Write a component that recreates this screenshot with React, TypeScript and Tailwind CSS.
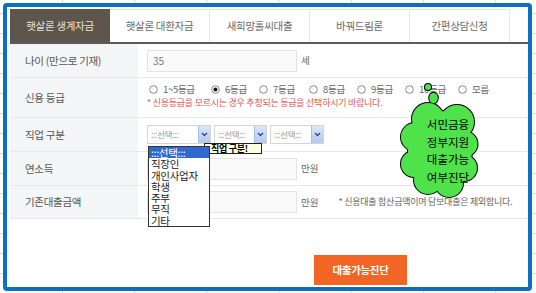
import React from "react";

const F = "font-['Noto_Sans_CJK_KR','Noto_Sans',sans-serif]";

function Radio({ checked }: { checked?: boolean }) {
  return (
    <svg width="9" height="9" viewBox="0 0 9 9" className="shrink-0">
      <circle cx="4.5" cy="4.5" r="3.8" fill="#fff" stroke="#8a8a8a" strokeWidth="1" />
      {checked && <circle cx="4.5" cy="4.5" r="2" fill="#111" />}
    </svg>
  );
}

function Select({ w }: { w: string }) {
  return (
    <div className={`${w} h-[19px] border border-[#d4d4d4] bg-white flex items-center justify-between`}>
      <span className="pl-[3px] text-[8.5px] text-[#9a9a9a] tracking-[-0.3px]">:::선택:::</span>
      <div className="w-[12px] h-[17px] bg-[linear-gradient(to_bottom,#dde7f8,#b3c7ee)] border-l border-[#a9bde6] flex items-center justify-center">
        <svg width="7" height="5" viewBox="0 0 7 5">
          <path d="M1 1 L3.5 3.5 L6 1" fill="none" stroke="#2b4c8c" strokeWidth="1.4" />
        </svg>
      </div>
    </div>
  );
}

function Input({ value }: { value?: string }) {
  return (
    <div className="w-[150px] h-[22px] border border-[#e3e3e3] bg-[#fafafa] flex items-center pl-[5px] text-[10px] text-[#777]">
      {value}
    </div>
  );
}

function Row({ label, h, children }: { label: string; h: string; children: React.ReactNode }) {
  return (
    <div className={`flex ${h} border-b border-[#e8e8e8]`}>
      <div className="w-[128px] bg-[#f3f5f6] flex items-center pl-[15px] text-[10.5px] text-[#555] tracking-[-0.3px]">
        {label}
      </div>
      <div className="flex-1 pl-[9px] flex items-center">{children}</div>
    </div>
  );
}

const CIRCLES: [number, number, number, number][] = [
  [428, 87, 3, 3],
  [433.5, 98, 4.3, 5.3],
  [428, 119, 16, 16],
  [457, 122, 17, 17],
  [415, 137, 14, 14],
  [414, 164, 13, 13],
  [465, 144, 12.5, 12.5],
  [464, 168, 13, 13],
  [428, 180, 14, 14],
  [449, 183, 14, 14],
  [440, 150, 32, 39],
];

export default function App() {
  const tabs = ["햇살론 대환자금", "새희망홀씨대출", "바꿔드림론", "간편상담신청"];
  const radios: [string, string, boolean][] = [
    ["1~5등급", "w-[62px]", false],
    ["6등급", "w-[48px]", true],
    ["7등급", "w-[50px]", false],
    ["8등급", "w-[48px]", false],
    ["9등급", "w-[48px]", false],
    ["10등급", "w-[53px]", false],
    ["모름", "w-[40px]", false],
  ];
  const items = [":::선택:::", "직장인", "개인사업자", "학생", "주부", "무직", "기타"];
  return (
    <div
      className={`${F} relative w-[536px] h-[293px] overflow-hidden bg-white bg-[linear-gradient(to_right,#d9d9d9_1px,transparent_1px),linear-gradient(to_bottom,#d9d9d9_1px,transparent_1px)] bg-[length:72.2px_20px] bg-[position:62px_13px] pt-[3px] pl-[3px]`}
    >
      <div className="w-[529px] h-[288px] border-4 border-[#0b6fc4] rounded-[4px] bg-white pl-[3px] pt-[2px] flex flex-col">
        {/* tabs */}
        <div className="flex h-[33px]">
          <div className="w-[100px] bg-[#5e554c] text-[#e6e1da] text-[10.5px] tracking-[-0.3px] flex items-center justify-center">
            햇살론 생계자금
          </div>
          {tabs.map((t) => (
            <div
              key={t}
              className="w-[100px] border-t border-r border-[#e6e6e6] text-[#6a6a6a] text-[10.5px] tracking-[-0.3px] flex items-center justify-center"
            >
              {t}
            </div>
          ))}
        </div>
        <div className="h-[2px] bg-[#5b5b5b]" />

        <Row label="나이 (만으로 기재)" h="h-[34px]">
          <Input value="35" />
          <span className="ml-[4px] text-[9.5px] text-[#666]">세</span>
        </Row>

        <div className="flex h-[40px] border-b border-[#e8e8e8]">
          <div className="w-[128px] bg-[#f3f5f6] flex items-center pl-[15px] text-[10.5px] text-[#555] tracking-[-0.3px]">
            신용 등급
          </div>
          <div className="flex-1 pl-[11px] pt-[4px] flex flex-col">
            <div className="flex items-center h-[14px]">
              {radios.map(([t, w, c]) => (
                <div key={t} className={`${w} flex items-center gap-[5px] text-[9.5px] text-[#666] tracking-[-0.3px]`}>
                  <Radio checked={c} />
                  <span>{t}</span>
                </div>
              ))}
            </div>
            <div className="-ml-[2px] h-[14px] flex items-center text-[9px] text-[#e0575c] tracking-[-0.25px]">
              * 신용등급을 모르시는 경우 추정되는 등급을 선택하시기 바랍니다.
            </div>
          </div>
        </div>

        <Row label="직업 구분" h="h-[34px]">
          <div className="flex gap-[3px]">
            <Select w="w-[64px]" />
            <Select w="w-[53px]" />
            <Select w="w-[54px]" />
          </div>
        </Row>

        <Row label="연소득" h="h-[34px]">
          <Input />
          <span className="ml-[4px] text-[9.5px] text-[#666]">만원</span>
        </Row>

        <Row label="기존대출금액" h="h-[33px]">
          <Input />
          <span className="ml-[4px] text-[9.5px] text-[#666]">만원</span>
          <span className="ml-[20px] text-[9px] text-[#666] tracking-[-0.25px]">
            * 신용대출 합산금액이며 담보대출은 제외합니다.
          </span>
        </Row>

        <div className="pl-[304px] pt-[36px]">
          <div className="w-[93px] h-[30px] bg-[#f26524] text-white text-[10.5px] font-bold tracking-[-0.3px] flex items-center justify-center">
            대출가능진단
          </div>
        </div>
      </div>

      {/* tooltip */}
      <div className="absolute left-[204px] top-[143px] w-[58px] h-[11px] bg-[#ffffe1] border border-[#222] pl-[6px] flex items-center text-[9px] font-bold text-black tracking-[-0.3px] leading-none">
        직업 구분!
      </div>

      {/* dropdown list */}
      <div className="absolute left-[148px] top-[146px] w-[62px] h-[81px] bg-white border border-[#333] text-[10.5px] text-[#222] leading-[11.3px] tracking-[-0.3px]">
        {items.map((it, i) => (
          <div key={it} className={i === 0 ? "bg-[#3168cf] text-white pl-[2px]" : "pl-[2px]"}>
            {it}
          </div>
        ))}
      </div>

      {/* cloud */}
      <svg
        className="absolute left-[395px] top-[80px]"
        width="90"
        height="122"
        viewBox="395 80 90 122"
      >
        <g fill="#000">
          {CIRCLES.map(([cx, cy, rx, ry], i) => (
            <ellipse key={i} cx={cx} cy={cy} rx={rx + 1} ry={ry + 1} />
          ))}
        </g>
        <g fill="#4fe24a">
          {CIRCLES.map(([cx, cy, rx, ry], i) => (
            <ellipse key={i} cx={cx} cy={cy} rx={rx} ry={ry} />
          ))}
        </g>
      </svg>
      <div className="absolute left-[418px] top-[116px] w-[60px] text-center text-[11.5px] leading-[17.5px] text-black">
        <div>서민금융</div>
        <div>정부지원</div>
        <div>대출가능</div>
        <div>여부진단</div>
      </div>
    </div>
  );
}
